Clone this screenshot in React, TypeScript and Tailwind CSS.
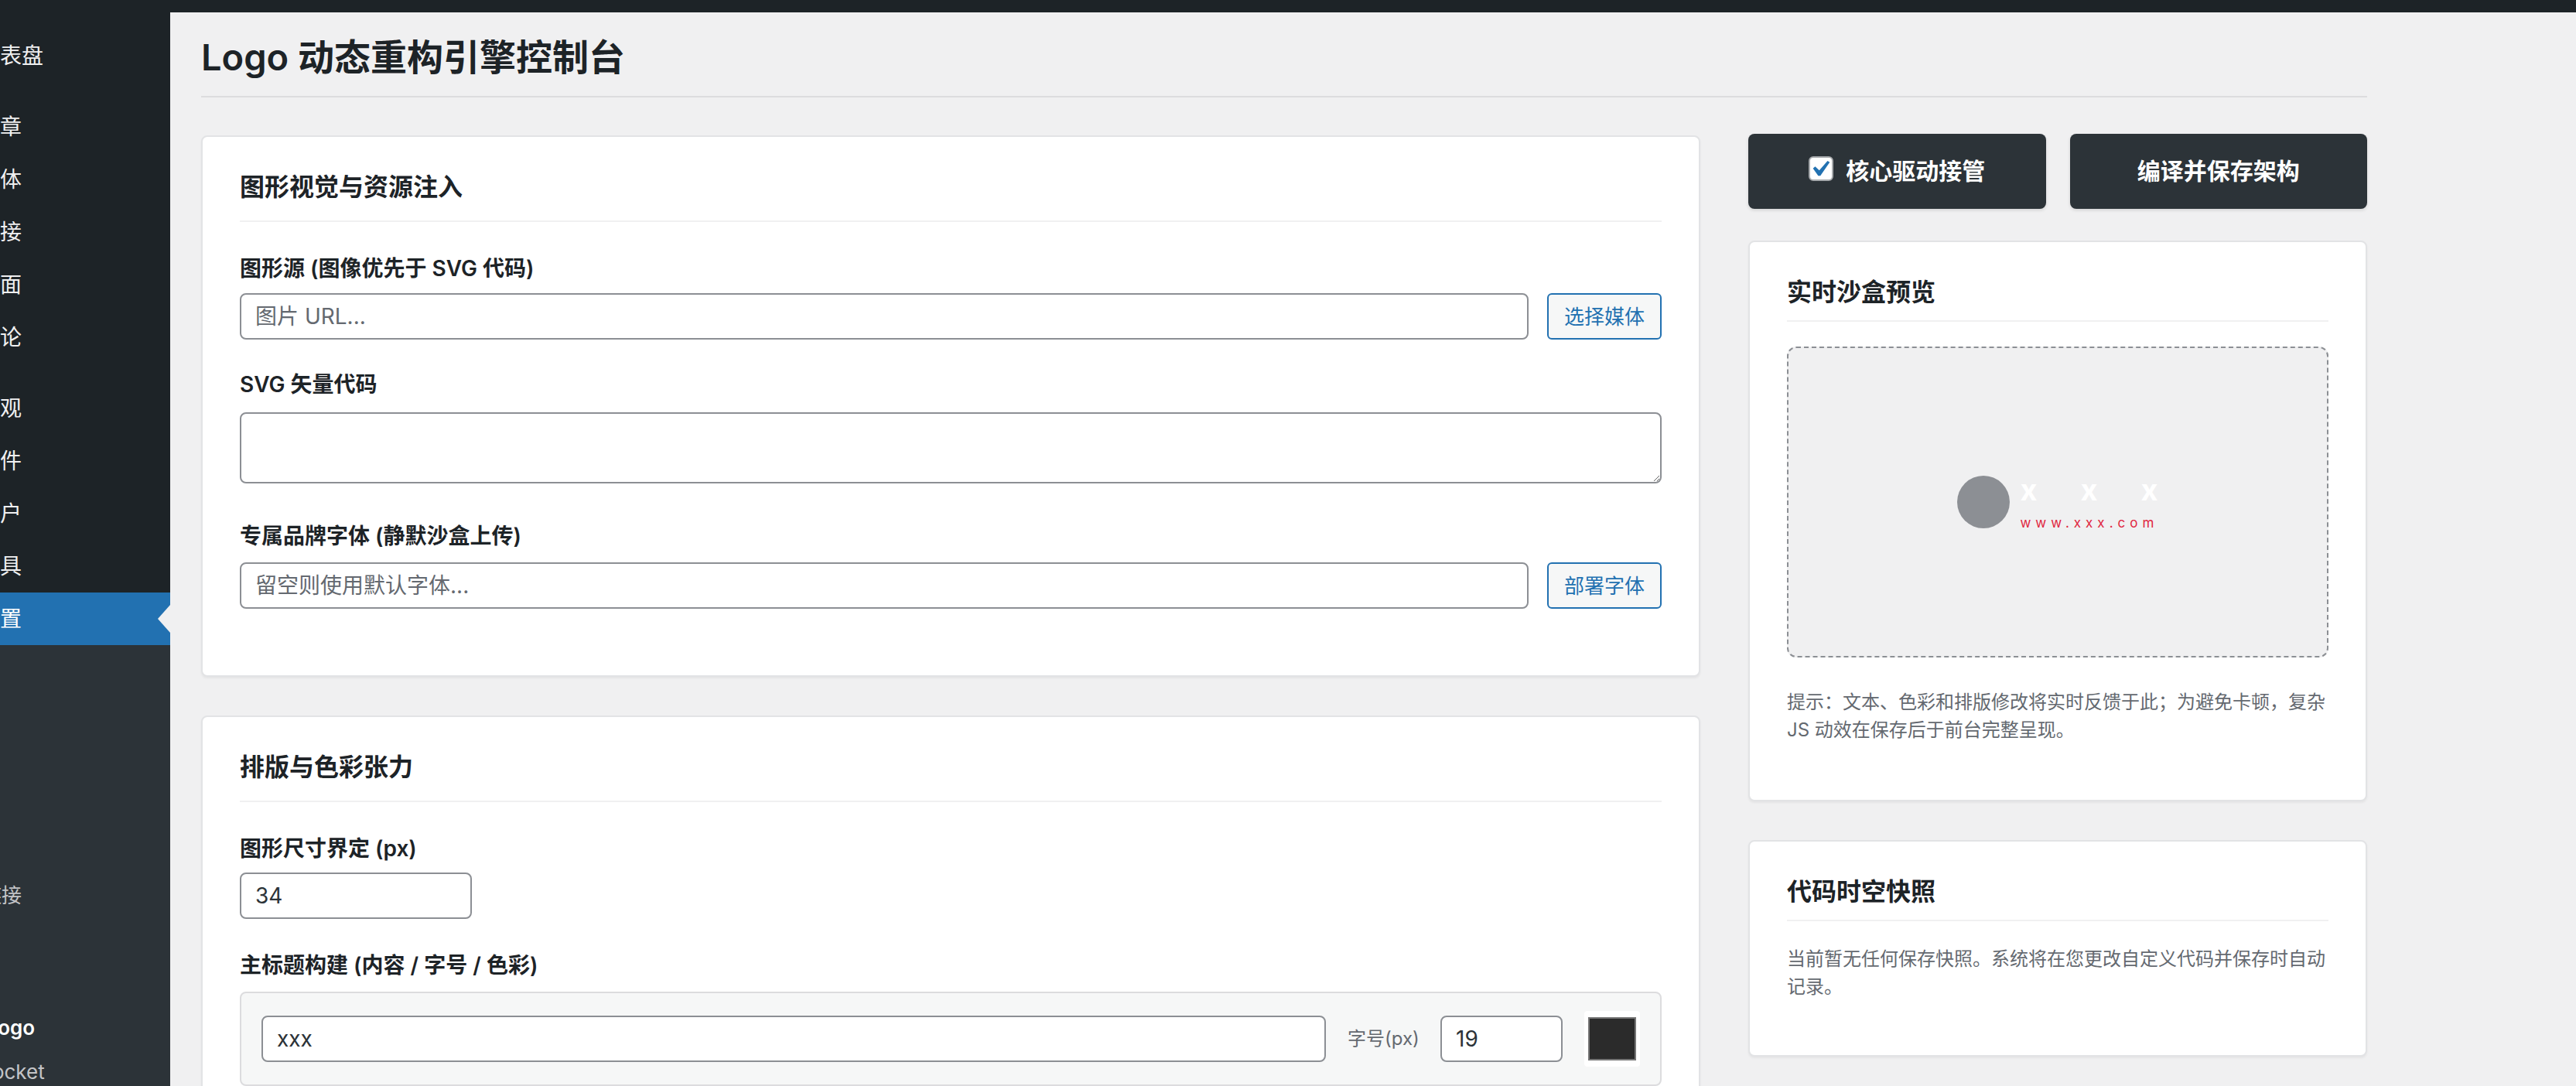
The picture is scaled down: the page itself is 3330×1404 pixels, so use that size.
import React from "react";

const font = "font-['Inter','Noto_Sans_CJK_SC',sans-serif]";

const menu = [
  { label: "仪表盘", sep: true },
  { label: "文章" },
  { label: "媒体" },
  { label: "链接" },
  { label: "页面" },
  { label: "评论", sep: true },
  { label: "外观" },
  { label: "插件" },
  { label: "用户" },
  { label: "工具" },
  { label: "设置", current: true },
];

const submenu = [
  { label: "常规" },
  { label: "撰写" },
  { label: "阅读" },
  { label: "讨论" },
  { label: "媒体" },
  { label: "固定链接" },
  { label: "隐私" },
  { label: "缓存" },
  { label: "品牌 Logo", current: true },
  { label: "WP Rocket" },
];

function Sidebar() {
  return (
    <aside className="w-[220px] shrink-0 bg-[#1d2327] overflow-hidden flex flex-col">
      {/* the screenshot is cropped on the left, so the menu sits 100px off-canvas */}
      <div className="-ml-[100px] w-[320px] flex-1 flex flex-col pt-[22px]">
        {menu.map((item) => (
          <div key={item.label}>
            <div
              className={
                item.current
                  ? "relative h-[68px] flex items-center pl-[72px] text-[28px] text-white bg-[#2271b1] whitespace-nowrap"
                  : "h-[68px] flex items-center pl-[72px] text-[28px] text-[#f0f0f1] whitespace-nowrap"
              }
            >
              {item.label}
              {item.current && (
                <span className="absolute right-0 top-1/2 -translate-y-1/2 w-0 h-0 border-y-[18px] border-y-transparent border-r-[16px] border-r-[#f0f0f1]" />
              )}
            </div>
            {item.sep && <div className="h-[24px]" />}
          </div>
        ))}
        <div className="flex-1 bg-[#2c3338] pt-[10px]">
          {submenu.map((item) => (
            <div
              key={item.label}
              className={
                item.current
                  ? "h-[57px] flex items-center pl-[24px] text-[26px] font-semibold text-white whitespace-nowrap"
                  : "h-[57px] flex items-center pl-[24px] text-[26px] text-[#c3c4c7] whitespace-nowrap"
              }
            >
              {item.label}
            </div>
          ))}
        </div>
      </div>
    </aside>
  );
}

function Card({
  title,
  side,
  className,
  children,
}: {
  title: string;
  side?: boolean;
  className?: string;
  children: React.ReactNode;
}) {
  return (
    <section
      className={
        "bg-white border-2 border-[#e2e3e5] rounded-[8px] p-[48px] shadow-[0_2px_3px_rgba(0,0,0,0.05)] " +
        (className || "")
      }
    >
      <h2
        className={
          side
            ? "text-[32px] leading-[34px] font-semibold text-[#1d2327] pb-[19px] border-b-2 border-[#f0f0f1]"
            : "text-[32px] leading-[34px] font-semibold text-[#1d2327] pb-[26px] border-b-2 border-[#f0f0f1]"
        }
      >
        {title}
      </h2>
      {children}
    </section>
  );
}

function Label({ text, className }: { text: string; className?: string }) {
  return (
    <div className={"text-[28px] leading-[36px] font-semibold text-[#1d2327] " + (className || "")}>
      {text}
    </div>
  );
}

const inputCls =
  "h-[60px] bg-white border-2 border-[#8c8f94] rounded-[8px] px-[18px] text-[28px] text-[#2c3338] placeholder:text-[#646970] outline-none";

const btnCls =
  "h-[60px] w-[148px] shrink-0 bg-[#f6f7f7] border-2 border-[#2271b1] rounded-[6px] text-[26px] text-[#2271b1]";

function CheckBox() {
  return (
    <span className="w-[32px] h-[32px] mb-[8px] bg-white rounded-[6px] border-2 border-[#a7aaad] flex items-center justify-center">
      <svg viewBox="4.5 3.5 12.5 12.5" className="w-[26px] h-[26px]">
        <path
          d="M14.83 4.89l1.34.94-5.81 8.38H9.02L5.78 9.67l1.34-1.25 2.57 2.4z"
          fill="#2271b1"
        />
      </svg>
    </span>
  );
}

export default function App() {
  return (
    <div className={"w-[3330px] h-[1404px] overflow-hidden flex flex-col bg-[#f0f0f1] " + font}>
      <div className="h-[16px] shrink-0 bg-[#1d2327]" />
      <div className="flex flex-1 min-h-0">
        <Sidebar />
        <main className="flex-1 pl-[40px]">
          <div className="w-[2800px]">
            <h1 className="pt-[28px] pb-[20px] text-[47px] leading-[60px] font-semibold text-[#1d2327] border-b-2 border-[#dcdcde]">
              Logo 动态重构引擎控制台
            </h1>

            <div className="grid grid-cols-[1fr_800px] gap-x-[62px] mt-[47px] items-start">
              {/* left column */}
              <div className="pt-[2px]">
                <Card title="图形视觉与资源注入">
                  <div className="pt-[42px] pb-[38px]">
                    <Label text="图形源 (图像优先于 SVG 代码)" className="mb-[14px]" />
                    <div className="flex gap-[24px]">
                      <input readOnly placeholder="图片 URL..." className={inputCls + " flex-1 min-w-0"} />
                      <button className={btnCls}>选择媒体</button>
                    </div>

                    <Label text="SVG 矢量代码" className="mt-[40px] mb-[18px]" />
                    <textarea
                      readOnly
                      className="block w-full h-[92px] bg-white border-2 border-[#8c8f94] rounded-[8px] px-[18px] py-[8px] text-[28px] outline-none"
                    />

                    <Label text="专属品牌字体 (静默沙盒上传)" className="mt-[50px] mb-[16px]" />
                    <div className="flex gap-[24px]">
                      <input readOnly placeholder="留空则使用默认字体..." className={inputCls + " flex-1 min-w-0"} />
                      <button className={btnCls}>部署字体</button>
                    </div>
                  </div>
                </Card>

                <Card title="排版与色彩张力" className="mt-[50px]">
                  <div className="pt-[42px] pb-[40px]">
                    <Label text="图形尺寸界定 (px)" className="mb-[13px]" />
                    <input readOnly defaultValue="34" className={inputCls + " w-[300px]"} />

                    <Label text="主标题构建 (内容 / 字号 / 色彩)" className="mt-[42px] mb-[16px]" />
                    <div className="bg-[#f6f7f7] border-2 border-[#dcdcde] rounded-[8px] py-[23px] px-[26px] flex items-center gap-[28px]">
                      <input readOnly defaultValue="xxx" className={inputCls + " flex-1 min-w-0"} />
                      <span className="w-[92px] shrink-0 text-[24px] text-[#646970] whitespace-nowrap">字号(px)</span>
                      <input readOnly defaultValue="19" className={inputCls + " w-[158px] shrink-0"} />
                      <span className="w-[72px] h-[72px] shrink-0 bg-white rounded-[4px] flex items-center justify-center">
                        <span className="w-[62px] h-[56px] bg-[#2b2b2b] border-2 border-[#767676]" />
                      </span>
                    </div>

                    <Label text="副标题构建 (内容 / 字号 / 色彩)" className="mt-[42px] mb-[16px]" />
                  </div>
                </Card>
              </div>

              {/* right column */}
              <div>
                <div className="flex gap-[31px] h-[97px]">
                  <button className="flex-1 bg-[#2c3338] rounded-[8px] shadow-[0_2px_4px_rgba(0,0,0,0.12)] flex items-center justify-center gap-[16px] text-[30px] font-semibold text-white">
                    <CheckBox />
                    核心驱动接管
                  </button>
                  <button className="flex-1 bg-[#2c3338] rounded-[8px] shadow-[0_2px_4px_rgba(0,0,0,0.12)] flex items-center justify-center text-[30px] font-semibold text-white">
                    编译并保存架构
                  </button>
                </div>

                <Card title="实时沙盒预览" side className="mt-[41px]">
                  <div className="mt-[32px] h-[402px] bg-[#f0f0f1] border-2 border-dashed border-[#8c8f94] rounded-[12px] flex items-center justify-center">
                    <div className="flex items-center gap-[13px]">
                      <span className="w-[68px] h-[68px] rounded-full bg-[#8c8f94]" />
                      <div className="flex flex-col">
                        <span className="text-[38px] leading-[40px] font-bold text-white tracking-[56px] -mr-[56px]">xxx</span>
                        <span className="mt-[13px] text-[17px] leading-[20px] text-[#e0263f] tracking-[6px] -mr-[6px]">www.xxx.com</span>
                      </div>
                    </div>
                  </div>
                  <p className="mt-[40px] mb-[24px] text-[24px] leading-[36px] text-[#646970] whitespace-nowrap">
                    提示：文本、色彩和排版修改将实时反馈于此；为避免卡顿，复杂
                    <br />
                    JS 动效在保存后于前台完整呈现。
                  </p>
                </Card>

                <Card title="代码时空快照" side className="mt-[50px]">
                  <p className="mt-[31px] mb-[22px] text-[24px] leading-[36px] text-[#646970] whitespace-nowrap">
                    当前暂无任何保存快照。系统将在您更改自定义代码并保存时自动
                    <br />
                    记录。
                  </p>
                </Card>
              </div>
            </div>
          </div>
        </main>
      </div>
    </div>
  );
}
